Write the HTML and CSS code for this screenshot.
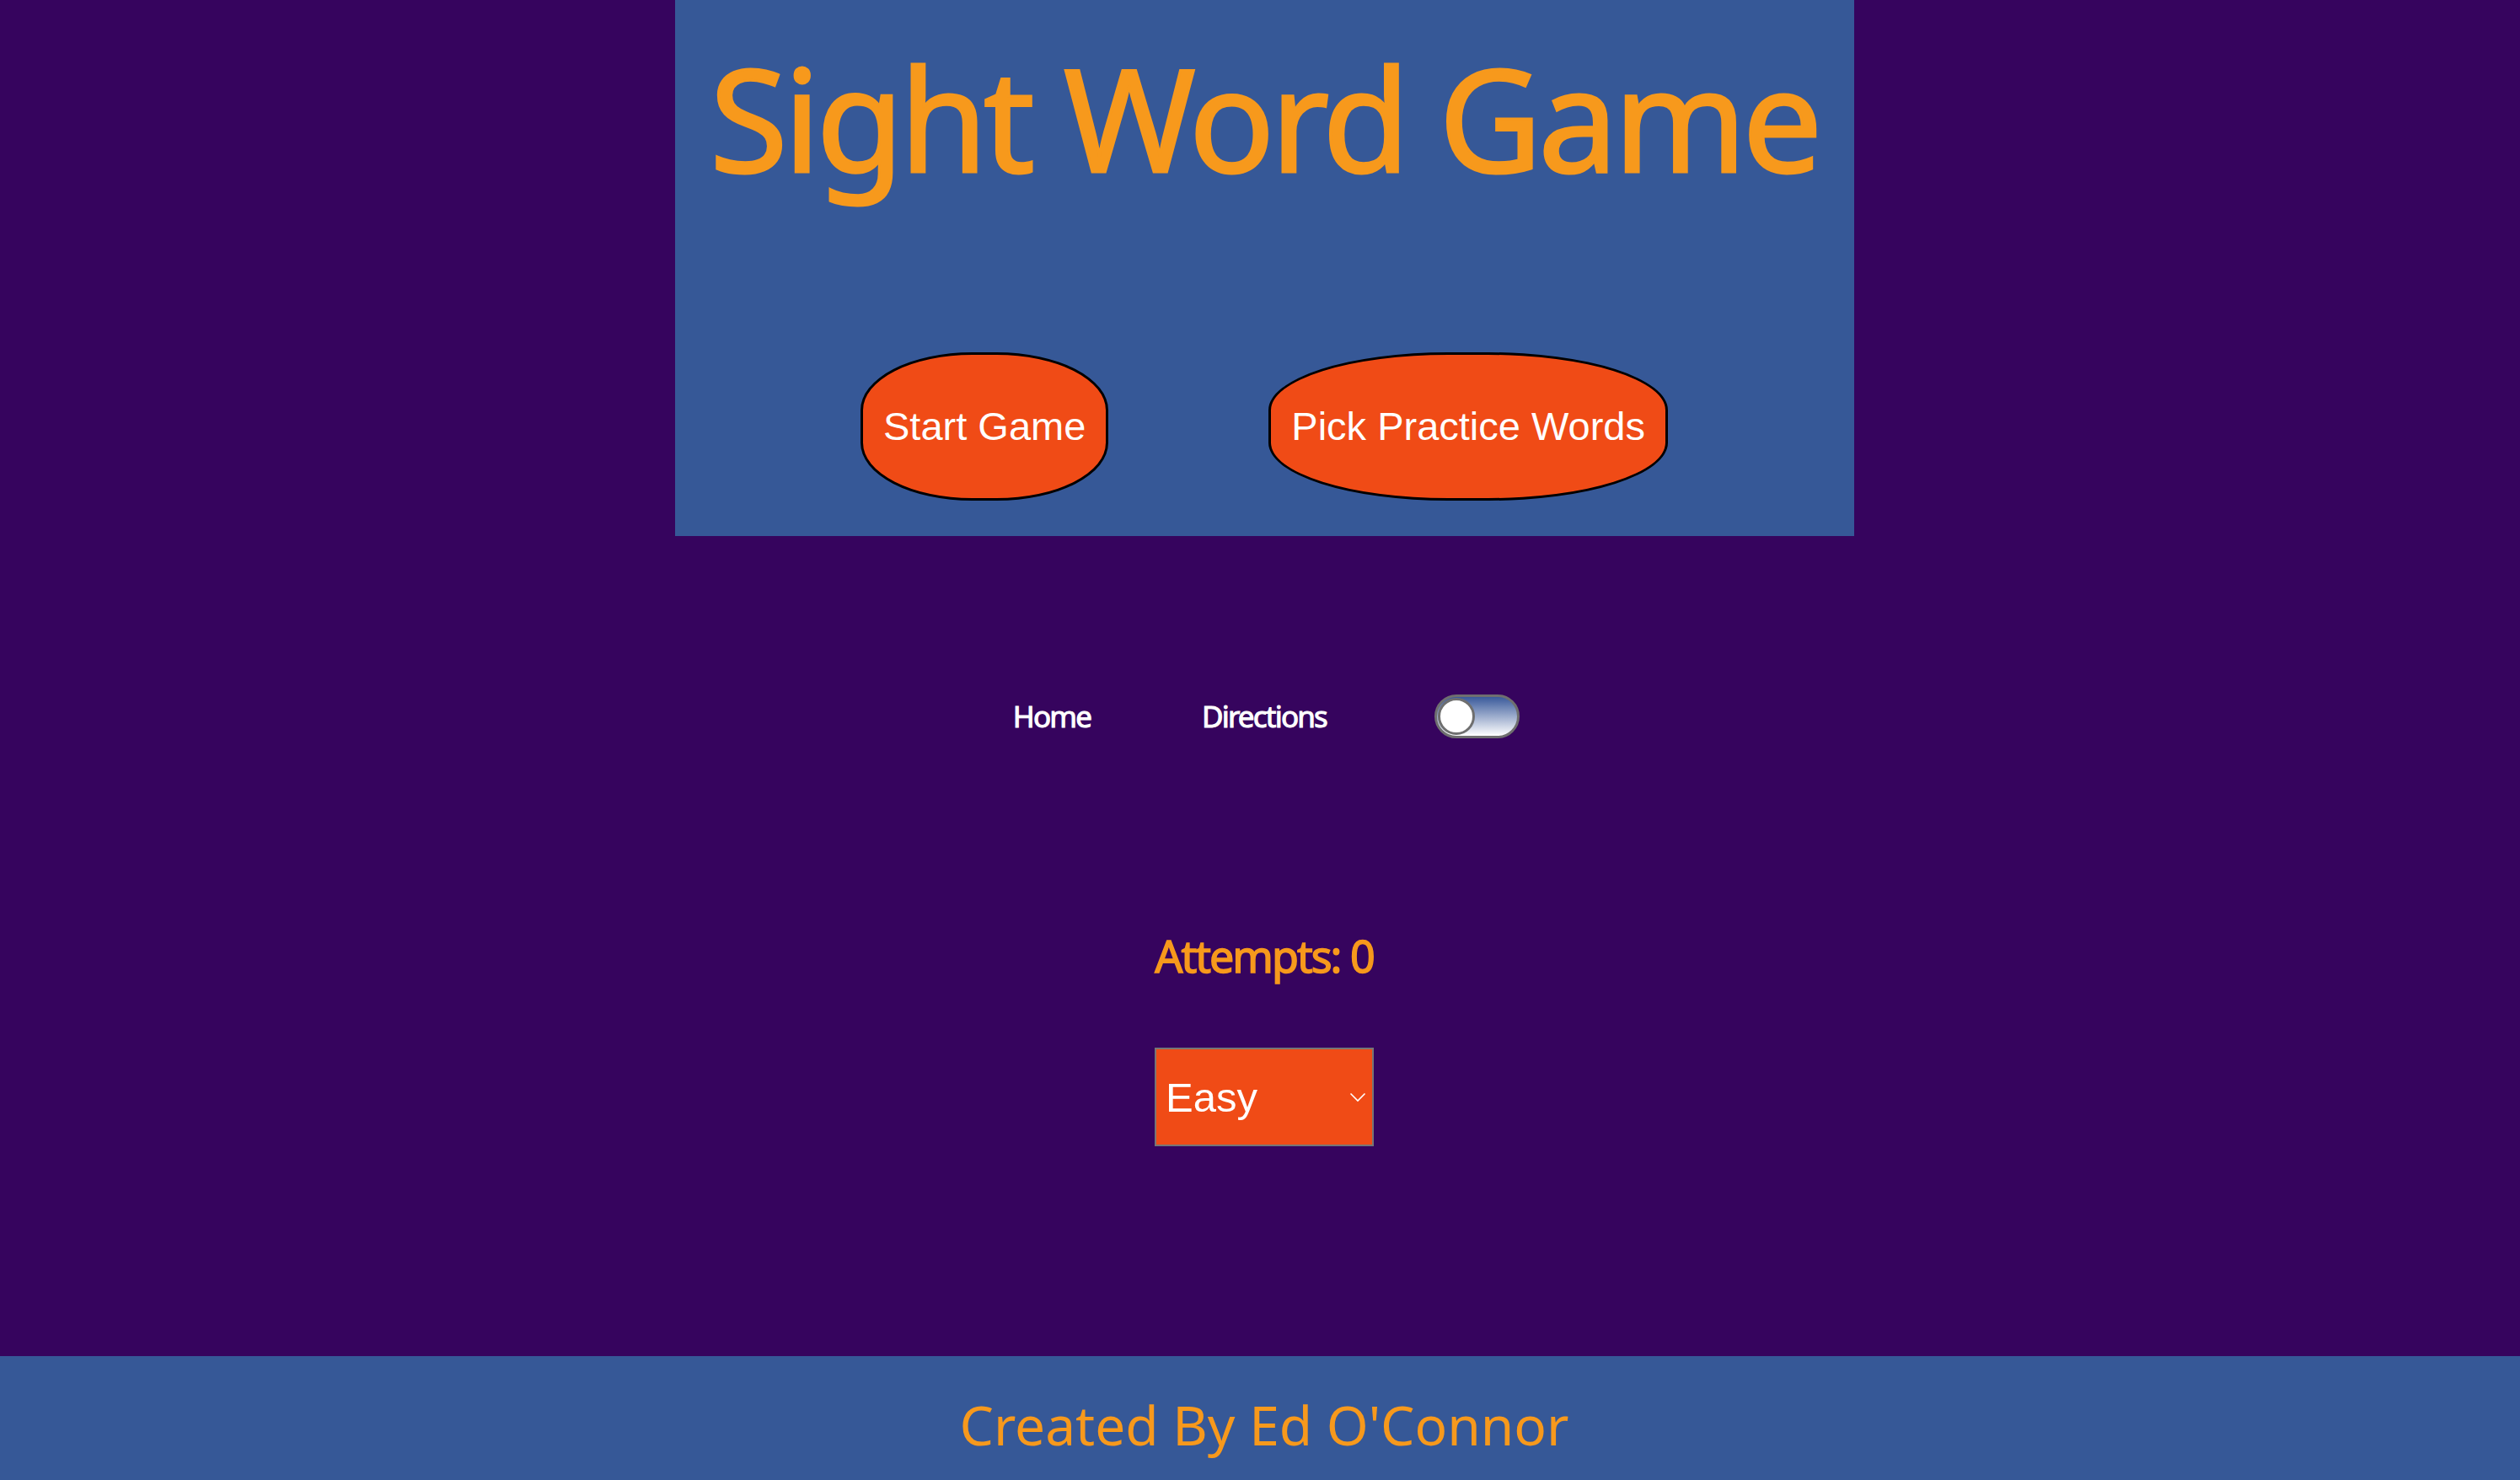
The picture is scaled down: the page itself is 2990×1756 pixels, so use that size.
FILE: index.html
```html
<!DOCTYPE html>
<html lang="en">
<head>
<meta charset="utf-8">
<title>Sight Word Game</title>
<link rel="stylesheet" href="styles.css">
</head>
<body>
<div class="page">
  <header class="hero">
    <h1 class="title">Sight Word Game</h1>
    <div class="actions">
      <button class="pill">Start Game</button>
      <button class="pill">Pick Practice Words</button>
    </div>
  </header>
  <nav class="nav">
    <a class="nav-link" href="#">Home</a>
    <a class="nav-link" href="#">Directions</a>
    <label class="toggle"><input type="checkbox" class="toggle-input"><span class="track"><span class="knob"></span></span></label>
  </nav>
  <section class="game">
    <p class="attempts">Attempts: 0</p>
    <div class="select-wrap">
      <select class="level">
        <option>Easy</option>
        <option>Medium</option>
        <option>Hard</option>
      </select>
      <svg class="chevron" width="20" height="12" viewBox="0 0 20 12"><path d="M1.5 1.5 L10 10 L18.5 1.5" fill="none" stroke="#fff" stroke-width="1.6"/></svg>
    </div>
  </section>
</div>
<footer class="footer">
  <p class="credit">Created By Ed O'Connor</p>
</footer>
</body>
</html>
```

FILE: styles.css
```css
html, body {
  margin: 0;
  padding: 0;
}
body {
  background: #36045e;
  font-family: "Noto Sans", "Open Sans", sans-serif;
}
.page {
  padding-left: 10px;
  height: 1609px;
  box-sizing: border-box;
}
.hero {
  width: 1399px;
  height: 636px;
  margin: 0 auto;
  background: #365897;
  box-sizing: border-box;
  padding-top: 24px;
}
.title {
  margin: 0;
  text-align: center;
  white-space: nowrap;
  color: #f7991c;
  -webkit-text-stroke: 3px #f7991c;
  font-family: "Noto Sans", sans-serif;
  font-weight: 400;
  font-size: 168px;
  letter-spacing: -4.5px;
  line-height: normal;
}
.actions {
  display: flex;
  justify-content: center;
  gap: 190px;
  margin-top: 165px;
}
.pill {
  font-family: "Liberation Sans", Arial, sans-serif;
  font-size: 47px;
  line-height: 54px;
  color: #fff;
  background: #f04b16;
  border: 3px solid #000;
  border-radius: 45% / 39%;
  padding: 58px 24px;
  cursor: pointer;
}
.nav {
  display: grid;
  grid-template-columns: repeat(3, 252px);
  justify-content: center;
  justify-items: center;
  align-items: center;
  margin-top: 187px;
  height: 53px;
}
.nav-link {
  color: #fff;
  text-decoration: none;
  font-weight: 400;
  -webkit-text-stroke: 1px #fff;
  font-size: 35px;
  letter-spacing: -1.8px;
}
.toggle {
  display: block;
  cursor: pointer;
}
.toggle-input {
  display: none;
}
.track {
  display: flex;
  align-items: center;
  width: 101px;
  height: 52px;
  box-sizing: border-box;
  border: 3px solid #6f6f6f;
  border-radius: 26px;
  background: linear-gradient(to bottom, #3a5a9b, #ffffff);
  padding-left: 1px;
}
.knob {
  width: 44px;
  height: 44px;
  box-sizing: border-box;
  border-radius: 50%;
  background: #fff;
  border: 3px solid #6f6f6f;
}
.game {
  display: flex;
  flex-direction: column;
  align-items: center;
  margin-top: 222px;
}
.attempts {
  margin: 0;
  color: #f7991c;
  font-weight: 400;
  -webkit-text-stroke: 1.5px #f7991c;
  font-size: 52px;
  letter-spacing: -2px;
  line-height: normal;
}
.select-wrap {
  position: relative;
  margin-top: 74px;
  width: 260px;
  height: 117px;
}
.level {
  -webkit-appearance: none;
  appearance: none;
  display: block;
  width: 260px;
  height: 117px;
  box-sizing: border-box;
  background-color: #f04b16;
  color: #fff;
  border: 2px solid #767676;
  border-radius: 0;
  font-family: "Liberation Sans", Arial, sans-serif;
  font-size: 49px;
  padding: 0 0 0 11px;
  margin: 0;
}
.chevron {
  position: absolute;
  right: 9px;
  top: 53px;
  pointer-events: none;
}
.footer {
  background: #365897;
  height: 147px;
  box-sizing: border-box;
  padding-top: 38px;
}
.credit {
  margin: 0;
  padding-left: 10px;
  text-align: center;
  color: #f7991c;
  font-size: 64px;
  font-weight: 400;
  line-height: normal;
}
```
